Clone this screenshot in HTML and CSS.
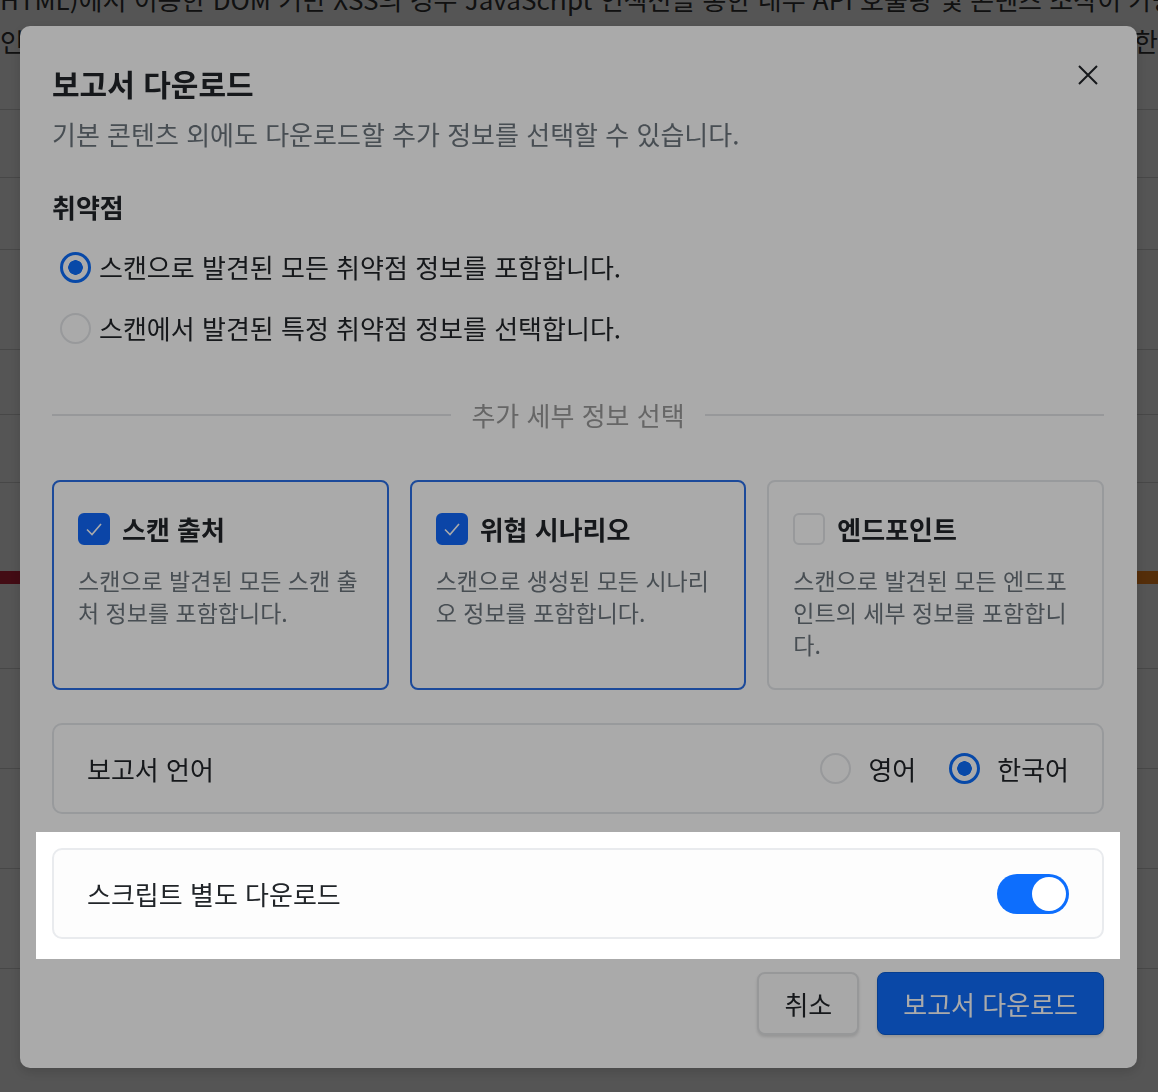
FILE: index.html
```html
<!doctype html>
<html lang="ko">
  <head>
    <meta charset="utf-8" />
    <title>보고서 다운로드</title>
    <link rel="stylesheet" href="styles.css">
  </head>
  <body>
    <main class="page">
      <p class="page-text">
        <span class="line line-cut">HTML)에서 이용한 DOM 기반 XSS의 경우 JavaScript 인젝션을 통한 내부 API 호출링 및 콘텐츠 조작이 가능합니다</span>
        <span class="line line-full">인증된 사용자 권한으로 임의의 요청을 보낼 수 있으므로 입력값 검증과 출력 인코딩이 필요한</span>
      </p>
      <div class="rows">
        <div class="row row-a"></div>
        <div class="row row-b"></div>
        <div class="row row-c"></div>
        <div class="row row-d"></div>
        <div class="row row-e"></div>
        <div class="row row-b"></div>
        <div class="row row-bar">
          <div class="bar"><span class="bar-high"></span><span class="bar-mid"></span></div>
        </div>
        <div class="row row-d"></div>
        <div class="row row-d"></div>
        <div class="row row-d"></div>
      </div>
    </main>

    <div class="backdrop"></div>

    <section class="modal" role="dialog" aria-labelledby="modal-title">
      <header class="modal-head">
        <div>
          <h2 id="modal-title">보고서 다운로드</h2>
          <p class="modal-sub">기본 콘텐츠 외에도 다운로드할 추가 정보를 선택할 수 있습니다.</p>
        </div>
        <button type="button" class="close" aria-label="닫기">
          <svg width="20" height="20" viewBox="0 0 20 20" aria-hidden="true">
            <path d="M1 1L19 19M19 1L1 19" stroke="#212529" stroke-width="2" fill="none" />
          </svg>
        </button>
      </header>

      <div class="group" role="radiogroup" aria-labelledby="vuln-title">
        <h3 id="vuln-title" class="group-title">취약점</h3>
        <label class="option">
          <input type="radio" name="scope" class="radio" checked />
          스캔으로 발견된 모든 취약점 정보를 포함합니다.
        </label>
        <label class="option">
          <input type="radio" name="scope" class="radio" />
          스캔에서 발견된 특정 취약점 정보를 선택합니다.
        </label>
      </div>

      <div class="divider"><span>추가 세부 정보 선택</span></div>

      <div class="cards">
        <label class="card is-checked">
          <span class="card-head">
            <span class="checkbox">
              <svg width="20" height="20" viewBox="0 0 20 20" aria-hidden="true">
                <path d="M3 10.5L8 15.5L17 5" stroke="#fff" stroke-width="1.6" fill="none" />
              </svg>
            </span>
            스캔 출처
          </span>
          <span class="card-text">스캔으로 발견된 모든 스캔 출처 정보를 포함합니다.</span>
        </label>
        <label class="card is-checked">
          <span class="card-head">
            <span class="checkbox">
              <svg width="20" height="20" viewBox="0 0 20 20" aria-hidden="true">
                <path d="M3 10.5L8 15.5L17 5" stroke="#fff" stroke-width="1.6" fill="none" />
              </svg>
            </span>
            위협 시나리오
          </span>
          <span class="card-text">스캔으로 생성된 모든 시나리오 정보를 포함합니다.</span>
        </label>
        <label class="card">
          <span class="card-head">
            <span class="checkbox"></span>
            엔드포인트
          </span>
          <span class="card-text">스캔으로 발견된 모든 엔드포인트의 세부 정보를 포함합니다.</span>
        </label>
      </div>

      <div class="setting">
        <span>보고서 언어</span>
        <div class="langs">
          <label class="lang"><input type="radio" name="lang" class="radio" /> 영어</label>
          <label class="lang"><input type="radio" name="lang" class="radio" checked /> 한국어</label>
        </div>
      </div>

      <div class="spotlight">
        <div class="setting setting-light">
          <span>스크립트 별도 다운로드</span>
          <span class="switch" role="switch" aria-checked="true"><span class="knob"></span></span>
        </div>
      </div>

      <footer class="modal-foot">
        <button type="button" class="btn btn-light">취소</button>
        <button type="button" class="btn btn-primary">보고서 다운로드</button>
      </footer>
    </section>
  </body>
</html>
```

FILE: styles.css
```css
html {
  font: 26px/1.5 "Noto Sans CJK KR", "Noto Sans", sans-serif;
  color: #212529;
}

body {
  margin: 0;
  background: #fff;
  overflow: hidden;
}

/* page behind the dialog */

.page {
  height: 1092px;
}

.page-text {
  margin: -19px 0 0;
  line-height: 36px;
  color: #333;
}

.line {
  display: block;
}

.line-cut {
  margin-bottom: 6px;
  white-space: nowrap;
  overflow: hidden;
}

.line-full {
  text-align: justify;
  text-align-last: justify;
}

.row {
  border-bottom: 1px solid #d6d6d6;
}

.row-a { height: 50px; }
.row-b { height: 67px; }
.row-c { height: 71px; }
.row-d { height: 99px; }
.row-e { height: 64px; }

.row-bar {
  height: 186px;
  padding-top: 88px;
  box-sizing: border-box;
}

.bar {
  display: flex;
  height: 13px;
}

.bar-high {
  flex: 1;
  background: #c8243d;
}

.bar-mid {
  flex: 1;
  background: #fd8a1e;
}

.backdrop {
  position: fixed;
  inset: 0;
  background: rgba(0, 0, 0, .5);
  z-index: 10;
}

/* dialog */

.modal {
  position: fixed;
  top: 26px;
  left: 20px;
  width: 1117px;
  box-sizing: border-box;
  padding: 40px 33px 33px 32px;
  background: #fff;
  border-radius: 10px;
  box-shadow: 0 4px 12px rgba(0, 0, 0, .15);
  z-index: 20;
}

.modal-head {
  display: flex;
  justify-content: space-between;
  align-items: flex-start;
}

.modal-head h2 {
  margin: 0;
  font-size: 30px;
  line-height: 34px;
  font-weight: 700;
}

.modal-sub {
  margin: 16px 0 0;
  line-height: 36px;
  color: #6c757d;
}

.close {
  width: 32px;
  height: 32px;
  margin-top: -7px;
  padding: 0;
  border: 0;
  background: none;
  display: flex;
  align-items: center;
  justify-content: center;
}

.group-title {
  margin: 37px 0 0;
  font-size: 26px;
  line-height: 36px;
  font-weight: 600;
}

.option {
  display: flex;
  align-items: center;
  gap: 8px;
  padding-left: 8px;
  margin-top: 24px;
  line-height: 36px;
}

.option + .option {
  margin-top: 25px;
}

.radio {
  appearance: none;
  margin: 0;
  width: 31px;
  height: 31px;
  flex: none;
  box-sizing: border-box;
  border: 2px solid #e4e6e9;
  border-radius: 50%;
  background: #fff;
}

.radio:checked {
  border: 3px solid #0d6efd;
  background: radial-gradient(circle, #0d6efd 0 7px, #fff 7.5px);
}

.divider {
  display: flex;
  align-items: center;
  gap: 20px;
  margin-top: 51px;
  line-height: 36px;
  color: #999;
}

.divider::before,
.divider::after {
  content: "";
  flex: 1;
  border-top: 2px solid #e3e5e8;
}

.cards {
  display: grid;
  grid-template-columns: repeat(3, 1fr);
  gap: 21px;
  margin-top: 47px;
}

.card {
  display: block;
  padding: 29px 24px 28px;
  border: 2px solid #e5e7eb;
  border-radius: 8px;
}

.card.is-checked {
  border-color: #2a6fe8;
}

.card-head {
  display: flex;
  align-items: center;
  gap: 12px;
  line-height: 36px;
  font-weight: 700;
}

.checkbox {
  width: 32px;
  height: 32px;
  box-sizing: border-box;
  border: 2px solid #e4e6e9;
  border-radius: 6px;
  display: flex;
  align-items: center;
  justify-content: center;
  background: #fff;
}

.is-checked .checkbox {
  border-color: #1168fb;
  background: #1168fb;
}

.card-text {
  display: block;
  margin-top: 17px;
  font-size: 23px;
  line-height: 32px;
  color: #6c757d;
}

.setting {
  display: flex;
  align-items: center;
  justify-content: space-between;
  height: 91px;
  box-sizing: border-box;
  margin-top: 33px;
  padding: 0 33px;
  border: 2px solid #e5e7eb;
  border-radius: 10px;
}

.langs {
  display: flex;
  gap: 33px;
}

.lang {
  display: flex;
  align-items: center;
  gap: 17px;
}

/* highlighted step of the guide */

.spotlight {
  position: relative;
  z-index: 5;
  margin: 18px -16px 0;
  padding: 16px 16px 20px;
  background: #fff;
  box-shadow: 0 0 0 3000px rgba(0, 0, 0, .333);
}

.setting-light {
  margin-top: 0;
  border-color: #e9ebee;
  background: #fdfdfd;
}

.switch {
  width: 72px;
  height: 40px;
  border-radius: 20px;
  background: #0d6efd;
  display: flex;
  align-items: center;
  justify-content: flex-end;
  padding: 0 3px;
  box-sizing: border-box;
}

.knob {
  width: 34px;
  height: 34px;
  border-radius: 50%;
  background: #fff;
}

.modal-foot {
  display: flex;
  justify-content: flex-end;
  gap: 18px;
  margin-top: 13px;
}

.btn {
  height: 63px;
  padding: 0 25px;
  font: inherit;
  border-radius: 8px;
  box-shadow: 0 2px 3px rgba(0, 0, 0, .12);
}

.btn-light {
  border: 2px solid #e3e4e6;
  background: #fdfdfd;
  color: #212529;
}

.btn-primary {
  border: 1px solid #0b5ed7;
  background: #0f6cfb;
  color: #fff;
}
```
